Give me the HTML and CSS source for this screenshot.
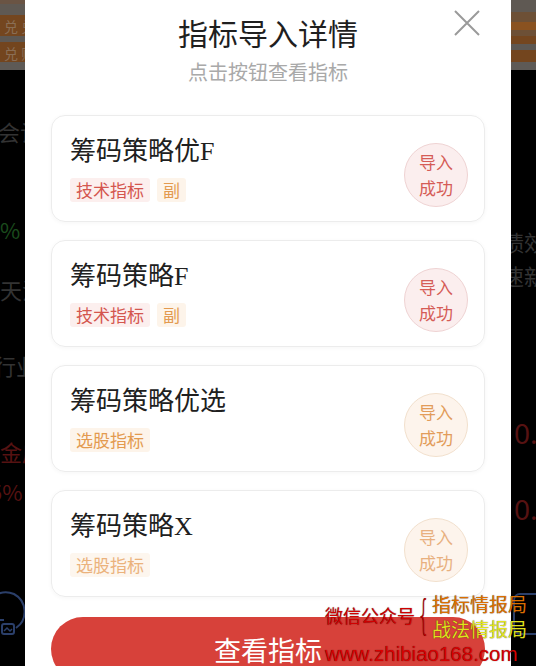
FILE: index.html
```html
<!DOCTYPE html>
<html lang="zh-CN">
<head>
<meta charset="utf-8">
<title>指标导入详情</title>
<link rel="stylesheet" href="styles.css">
</head>
<body>
<div class="page">
  <div class="page-head">
    <div class="head-left"><span class="stripe-text">兑 兑</span><span class="stripe-text">兑 购</span></div>
    <div class="head-right"></div>
  </div>
  <div class="page-body">
    <div class="col col-left">
      <span class="bg-text t-grey l1">会计</span>
      <span class="bg-text t-green l2">%</span>
      <span class="bg-text t-grey l3">天法</span>
      <span class="bg-text t-grey l4">行业</span>
      <span class="bg-text t-red l5">金店</span>
      <span class="bg-text t-red l6">5%</span>
      <svg class="bg-icon l7" width="40" height="60" viewBox="0 0 40 60"><path d="M-6 22 A20 20 0 0 1 22 6 A20 20 0 0 1 24 40" fill="none" stroke="#2b3f6a" stroke-width="2"/><path d="M4 24 V40 M-4 32 H12" stroke="#2b3f6a" stroke-width="2"/><rect x="10" y="36" width="12" height="10" rx="2" fill="none" stroke="#2b3f6a" stroke-width="2"/><path d="M12 43 l3 -3 l3 3 l2 -2" fill="none" stroke="#2b3f6a" stroke-width="1.5"/></svg>
    </div>
    <div class="col col-right">
      <span class="bg-text t-grey r1">绩效</span>
      <span class="bg-text t-grey r2">速新</span>
      <span class="bg-num t-red r3">0.</span>
      <span class="bg-num t-red r4">0.</span>
      <svg class="bg-icon r5" width="30" height="50" viewBox="0 0 30 50"><rect x="4" y="4" width="30" height="40" rx="6" fill="none" stroke="#2b3f6a" stroke-width="2"/></svg>
    </div>
  </div>
</div>

<div class="modal">
  <button class="close" aria-label="关闭">
    <svg width="26" height="26" viewBox="0 0 26 26"><path d="M1 1 L25 25 M25 1 L1 25" stroke="#9a9a9a" stroke-width="2" fill="none"/></svg>
  </button>
  <h1 class="modal-title">指标导入详情</h1>
  <p class="modal-sub">点击按钮查看指标</p>

  <div class="card-list">
    <div class="card">
      <div class="card-main">
        <div class="card-title">筹码策略优F</div>
        <div class="tags"><span class="tag tag-red">技术指标</span><span class="tag tag-orange">副</span></div>
      </div>
      <div class="badge badge-red">导入<br>成功</div>
    </div>
    <div class="card">
      <div class="card-main">
        <div class="card-title">筹码策略F</div>
        <div class="tags"><span class="tag tag-red">技术指标</span><span class="tag tag-orange">副</span></div>
      </div>
      <div class="badge badge-red">导入<br>成功</div>
    </div>
    <div class="card">
      <div class="card-main">
        <div class="card-title">筹码策略优选</div>
        <div class="tags"><span class="tag tag-orange">选股指标</span></div>
      </div>
      <div class="badge badge-orange">导入<br>成功</div>
    </div>
    <div class="card card-faded">
      <div class="card-main">
        <div class="card-title">筹码策略X</div>
        <div class="tags"><span class="tag tag-orange">选股指标</span></div>
      </div>
      <div class="badge badge-orange">导入<br>成功</div>
    </div>
  </div>

  <button class="view-btn">查看指标</button>
</div>

<div class="watermark">
  <span class="wm-label">微信公众号</span>
  <span class="wm-brace">{</span>
  <span class="wm-names"><span class="wm-orange">指标情报局</span><span class="wm-yellow">战法情报局</span></span>
  <span class="wm-url">www.zhibiao168.com</span>
</div>
</body>
</html>
```

FILE: styles.css
```css
* { box-sizing: border-box; }

html, body {
  margin: 0;
  padding: 0;
}

body {
  width: 536px;
  height: 666px;
  overflow: hidden;
  background: #000;
  position: relative;
  font-family: "Noto Sans CJK SC", "Noto Sans", sans-serif;
}

/* ---------- background page (dimmed) ---------- */
.page {
  width: 536px;
  height: 666px;
  display: flex;
  flex-direction: column;
}

.page-head {
  height: 70px;
  display: flex;
  justify-content: space-between;
}

.head-left, .head-right {
  width: 60px;
  background: linear-gradient(to bottom,
    #6a5444 0, #6a5444 4px,
    #5f5953 4px, #5f5953 15px,
    #74461f 15px, #74461f 36px,
    #5d5853 36px, #5d5853 42px,
    #73451e 42px, #73451e 62px,
    #5e5a56 62px, #5e5a56 70px);
}

.head-left {
  display: flex;
  flex-direction: column;
  padding-top: 16px;
  gap: 7px;
  overflow: hidden;
}

.stripe-text {
  color: #8a6e55;
  font-size: 14px;
  line-height: 20px;
  padding-left: 4px;
  white-space: nowrap;
}

.head-right {
  background:
    linear-gradient(to bottom, transparent 0, transparent 22px, #8a5220 22px, #8a5220 30px, transparent 30px),
    linear-gradient(to bottom,
    #5f5953 0, #5f5953 12px,
    #6d5036 12px, #6d5036 36px,
    #74461f 36px, #74461f 44px,
    #5d5853 44px, #5d5853 50px,
    #73451e 50px, #73451e 62px,
    #5e5a56 62px, #5e5a56 70px);
}

.page-body {
  flex: 1;
  display: flex;
  justify-content: space-between;
}

.col {
  width: 30px;
  display: flex;
  flex-direction: column;
  overflow: hidden;
}

.bg-text {
  font-size: 22px;
  line-height: 26px;
  white-space: nowrap;
}

.bg-num {
  font-size: 28px;
  line-height: 30px;
  font-family: "Noto Sans", sans-serif;
  white-space: nowrap;
}

.t-grey { color: #333; }
.t-green { color: #1a4a1c; }
.t-red { color: #561212; }

.bg-icon { display: block; flex: none; }

.l1 { margin-top: 48px; margin-left: -2px; }
.l2 { margin-top: 72px; margin-left: 0; }
.l3 { margin-top: 34px; margin-left: 0; }
.l4 { margin-top: 50px; margin-left: -6px; }
.l5 { margin-top: 60px; margin-left: 0; }
.l6 { margin-top: 14px; margin-left: -10px; }
.l7 { margin-top: 84px; margin-left: -8px; }

.col-right { width: 26px; }
.r1 { margin-top: 158px; margin-left: -8px; }
.r2 { margin-top: 8px; margin-left: -8px; }
.r3 { margin-top: 130px; margin-left: 4px; }
.r4 { margin-top: 46px; margin-left: 4px; }
.r5 { margin-top: 66px; margin-left: 0; }

/* ---------- modal ---------- */
.modal {
  position: absolute;
  left: 25px;
  top: 0;
  width: 486px;
  height: 700px;
  background: #fff;
  display: flex;
  flex-direction: column;
  align-items: stretch;
  padding: 12px 26px 0;
}

.close {
  position: absolute;
  top: 10px;
  right: 31px;
  width: 26px;
  height: 26px;
  padding: 0;
  border: 0;
  background: none;
  display: flex;
}

.modal-title {
  margin: 0;
  text-align: center;
  font-size: 30px;
  line-height: 40px;
  font-weight: 400;
  color: #1f1f1f;
}

.modal-sub {
  margin: 6px 0 0;
  text-align: center;
  font-size: 20px;
  line-height: 28px;
  color: #a9a9a9;
}

.card-list {
  margin-top: 29px;
  display: flex;
  flex-direction: column;
  gap: 18px;
}

.card {
  height: 107px;
  border: 1px solid #ececec;
  border-radius: 14px;
  box-shadow: 0 1px 4px rgba(0, 0, 0, 0.04);
  display: flex;
  justify-content: space-between;
  align-items: flex-start;
  padding: 19px 16px 0 18px;
}

.card-main {
  display: flex;
  flex-direction: column;
  gap: 9px;
}

.card-title {
  font-family: "Liberation Serif", "Noto Sans CJK SC", serif;
  font-size: 26px;
  line-height: 34px;
  color: #202020;
  font-weight: 400;
}

.tags {
  display: flex;
  gap: 7px;
}

.tag {
  height: 24px;
  line-height: 24px;
  font-size: 17px;
  padding: 0 6px;
  border-radius: 3px;
}

.tag-red { color: #d4564e; background: #fcefee; }
.tag-orange { color: #e39a4f; background: #fdf4ea; }

.badge {
  width: 64px;
  height: 64px;
  margin-top: 8px;
  border-radius: 50%;
  display: flex;
  align-items: center;
  justify-content: center;
  text-align: center;
  font-size: 17px;
  line-height: 26px;
  flex: none;
}

.badge-red { background: #fbeeee; border: 1px solid #efd3d3; color: #d55c56; }
.badge-orange { background: #fdf4ec; border: 1px solid #f2e0cd; color: #e29c5a; }

.card-faded .tag-orange { color: #ebb27c; background: #fdf6ee; }
.card-faded .badge-orange { color: #e8b07f; }

.view-btn {
  margin-top: 20px;
  height: 64px;
  border: 0;
  border-radius: 32px;
  background: #d7413a;
  color: #fff;
  font-family: "Noto Sans CJK SC", sans-serif;
  font-size: 27px;
  padding: 0;
}

/* ---------- watermark overlay ---------- */
.watermark {
  position: absolute;
  left: 325px;
  top: 594px;
  width: 211px;
  height: 72px;
  display: grid;
  grid-template-columns: auto 17px 1fr;
  grid-template-rows: 48px 24px;
  text-shadow: 0 0 1px rgba(0, 0, 0, 0.7);
}

.wm-label {
  align-self: center;
  margin-top: -6px;
  font-size: 18px;
  line-height: 22px;
  color: #d00000;
}

.wm-brace {
  align-self: center;
  justify-self: center;
  margin-top: -6px;
  font-family: "DejaVu Sans", sans-serif;
  font-weight: 200;
  font-size: 40px;
  line-height: 44px;
  color: #b80000;
  transform: scaleX(0.5);
}

.wm-names {
  display: flex;
  flex-direction: column;
  font-size: 19px;
  line-height: 24px;
  margin-top: -2px;
}

.wm-orange { color: #dc6f00; }
.wm-yellow { color: #e2e21c; margin-top: 1px; }

.wm-url {
  grid-column: 1 / 4;
  font-family: "Liberation Sans", sans-serif;
  font-size: 20.5px;
  line-height: 24px;
  color: #d80000;
  white-space: nowrap;
}
```
